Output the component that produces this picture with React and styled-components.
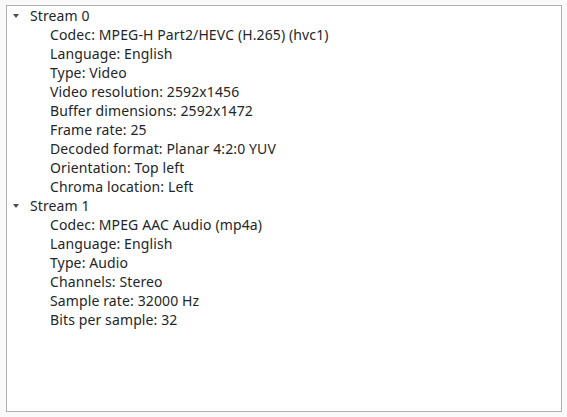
import React from 'react'
import styled, { createGlobalStyle } from 'styled-components'

const GlobalStyle = createGlobalStyle`
  html, body {
    margin: 0;
    padding: 0;
    background: #fafafa;
  }
  body {
    font-family: "Noto Sans", "DejaVu Sans", sans-serif;
    font-size: 14px;
    letter-spacing: 0.12px;
    color: #232629;
  }
`

const Page = styled.div`
  width: 567px;
  height: 417px;
  box-sizing: border-box;
  padding: 5px 5px 5px 6px;
`

const Tree = styled.div`
  box-sizing: border-box;
  height: 407px;
  width: 556px;
  background: #fff;
  border: 1px solid #b0b0b0;
  padding: 0;
`

const Row = styled.div`
  display: flex;
  align-items: center;
  height: 19px;
  padding-left: ${p => p.$indent}px;
  white-space: nowrap;
`

const Arrow = styled.span`
  width: 0;
  height: 0;
  border-left: 3px solid transparent;
  border-right: 3px solid transparent;
  border-top: 4px solid #4d4d4d;
  margin-right: 11px;
  margin-left: 6px;
`

const streams = [
  {
    name: 'Stream 0',
    props: [
      'Codec: MPEG-H Part2/HEVC (H.265) (hvc1)',
      'Language: English',
      'Type: Video',
      'Video resolution: 2592x1456',
      'Buffer dimensions: 2592x1472',
      'Frame rate: 25',
      'Decoded format: Planar 4:2:0 YUV',
      'Orientation: Top left',
      'Chroma location: Left',
    ],
  },
  {
    name: 'Stream 1',
    props: [
      'Codec: MPEG AAC Audio (mp4a)',
      'Language: English',
      'Type: Audio',
      'Channels: Stereo',
      'Sample rate: 32000 Hz',
      'Bits per sample: 32',
    ],
  },
]

export default function App() {
  return (
    <Page>
      <GlobalStyle />
      <Tree>
        {streams.map(s => (
          <React.Fragment key={s.name}>
            <Row $indent={0}>
              <Arrow />
              {s.name}
            </Row>
            {s.props.map(p => (
              <Row key={p} $indent={43}>{p}</Row>
            ))}
          </React.Fragment>
        ))}
      </Tree>
    </Page>
  )
}
